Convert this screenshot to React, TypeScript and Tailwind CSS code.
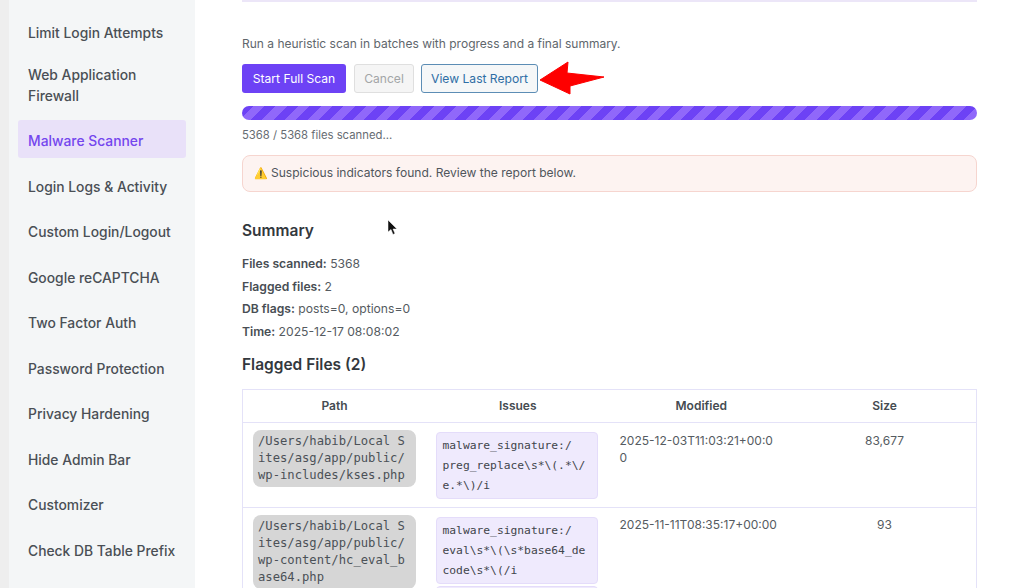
import React from "react";

const navItems = [
  "Limit Login Attempts",
  "Web Application Firewall",
  "Malware Scanner",
  "Login Logs & Activity",
  "Custom Login/Logout",
  "Google reCAPTCHA",
  "Two Factor Auth",
  "Password Protection",
  "Privacy Hardening",
  "Hide Admin Bar",
  "Customizer",
  "Check DB Table Prefix",
];

const summary = [
  ["Files scanned:", "5368"],
  ["Flagged files:", "2"],
  ["DB flags:", "posts=0, options=0"],
  ["Time:", "2025-12-17 08:08:02"],
];

const mono = "font-['DejaVu_Sans_Mono','Liberation_Mono',monospace]";

const PathCode = ({ children }: { children: React.ReactNode }) => (
  <div className={`${mono} bg-[#d6d6d6] rounded-lg px-[5px] py-[3px] text-[12.2px] leading-[17px] text-[#4b5157] break-all`}>
    {children}
  </div>
);

const IssueCode = ({ children }: { children?: React.ReactNode }) => (
  <div className={`${mono} w-[162px] -ml-[0.5px] bg-[#efeafd] border border-[#e4dcfa] rounded px-[6px] pt-[3px] pb-[2px] text-[11.3px] leading-[20px] text-[#3f454b] whitespace-nowrap`}>
    {children}
  </div>
);

const App = () => {
  return (
    <div className="h-[588px] w-[1024px] overflow-hidden flex bg-white font-['Inter','Liberation_Sans',sans-serif] relative">
      <div className="w-[9px] shrink-0 bg-[#eeeeee]" />
      <aside className="w-[186px] shrink-0 bg-[#f4f6f7] px-[9px] pt-[14px] flex flex-col gap-[7.5px]">
        {navItems.map((item, i) => (
          <div
            key={item}
            className={
              (i === 0 ? "-mb-[3.5px] " : "") +
              (item === "Malware Scanner"
                ? "-mt-[3px] mb-[3px] rounded-[3px] bg-[#e9e1f9] text-[#7446ee] pl-[10px] pr-[6px] pt-[11.5px] pb-[5.5px] text-[13.85px] leading-[21px] font-medium"
                : "pl-[10px] pr-[6px] py-[8.5px] text-[13.85px] leading-[21px] font-medium text-[#4a4f55]")
            }
          >
            {item}
          </div>
        ))}
      </aside>
      <main className="flex-1 pl-[47px] pr-[47px]">
        <div className="h-[2px] bg-[#ece6f8]" />
        <p className="mt-[35px] text-[12px] leading-[14px] text-[#60666c]">
          Run a heuristic scan in batches with progress and a final summary.
        </p>
        <div className="mt-[13px] flex gap-[7px]">
          <button className="h-[29px] w-[104px] mr-[1px] pt-[1px] rounded-[3px] bg-[#6d42f5] text-white text-[12.1px]">Start Full Scan</button>
          <button className="h-[29px] w-[60px] pt-[1px] rounded-[3px] bg-[#f5f5f5] border border-[#dfdfdf] text-[#a3a5a7] text-[12.1px]">Cancel</button>
          <button className="h-[29px] w-[117px] pt-[1px] rounded-[3px] bg-[#f5f7f8] border border-[#5c8db5] text-[#2f6ea5] text-[12.1px]">View Last Report</button>
        </div>
        <div className="mt-[13px] h-[14px] rounded-full bg-[repeating-linear-gradient(135deg,#6d42f5_0px,#6d42f5_8px,#9068fa_8px,#9068fa_16px)]" />
        <p className="mt-[8px] text-[11.3px] leading-[14px] text-[#666c72]">5368 / 5368 files scanned...</p>
        <div className="mt-[12.5px] h-[37px] pt-[1px] rounded-lg bg-[#fdf3f1] border border-[#f6d5cf] pl-[11px] flex items-center text-[12.05px] text-[#50565c]">
          <span className="mr-[3px] text-[11px] text-[#f2b90f]">⚠️</span>
          Suspicious indicators found. Review the report below.
        </div>
        <h2 className="mt-[29.5px] text-[15.5px] leading-[20px] font-semibold text-[#33383d]">Summary</h2>
        <div className="mt-[14px] flex flex-col gap-[5.67px]">
          {summary.map(([label, value]) => (
            <p key={label} className="text-[12.15px] leading-[17px] text-[#555b61]">
              <span className="font-semibold text-[#484e54]">{label}</span> {value}
            </p>
          ))}
        </div>
        <h2 className="mt-[15px] text-[15.5px] leading-[20px] font-semibold text-[#33383d]">Flagged Files (2)</h2>
        <table className="mt-[14px] w-full table-fixed border-collapse border border-[#e4e2f8]">
          <thead>
            <tr className="border-b border-[#e4e2f8] h-[33px]">
              {["Path", "Issues", "Modified", "Size"].map((h) => (
                <th key={h} className="text-center text-[12px] font-semibold text-[#454b51]">{h}</th>
              ))}
            </tr>
          </thead>
          <tbody>
            <tr className="border-b border-[#e4e2f8] align-top">
              <td className="px-[10px] pt-[7.5px] pb-[7.5px]"><PathCode>/Users/habib/Local Sites/asg/app/public/wp-includes/kses.php</PathCode></td>
              <td className="px-[10px] pt-[9.5px] pb-[7.5px]">
                <IssueCode>malware_signature:/<br />preg_replace\s*\(.*\/<br />e.*\)/i</IssueCode>
              </td>
              <td className="px-[10px] pt-[9px] text-[12px] leading-[17px] text-[#555b61]">2025-12-03T11:03:21+00:0<br />0</td>
              <td className="px-[10px] pt-[9px] text-[12px] leading-[17px] text-[#555b61] text-center">83,677</td>
            </tr>
            <tr className="align-top">
              <td className="px-[10px] pt-[7px]"><PathCode>/Users/habib/Local Sites/asg/app/public/wp-content/hc_eval_base64.php</PathCode></td>
              <td className="px-[10px] pt-[9px]">
                <IssueCode>malware_signature:/<br />eval\s*\(\s*base64_de<br />code\s*\(/i</IssueCode>
                <div className="mt-[2px]"><IssueCode>&nbsp;</IssueCode></div>
              </td>
              <td className="px-[10px] pt-[8px] text-[12px] leading-[17px] text-[#555b61]">2025-11-11T08:35:17+00:00</td>
              <td className="px-[10px] pt-[8px] text-[12px] leading-[17px] text-[#555b61] text-center">93</td>
            </tr>
          </tbody>
        </table>
      </main>
      <svg className="absolute left-[538px] top-[60px]" width="68" height="36" viewBox="0 0 68 36">
        <path d="M2 20 L30 2 L29 13 L66 17 L32 26 L32 34 Z" fill="#fe0000" stroke="#fe0000" strokeWidth="1" strokeLinejoin="round" />
      </svg>
      <svg className="absolute left-[387px] top-[219px]" width="11" height="18" viewBox="0 0 11 18">
        <path d="M1 1 L1 13 L4 10.5 L6 15.5 L8 14.5 L6 10 L10 10 Z" fill="#111111" stroke="#ffffff" strokeWidth="0.5" />
      </svg>
    </div>
  );
};

export default App;
